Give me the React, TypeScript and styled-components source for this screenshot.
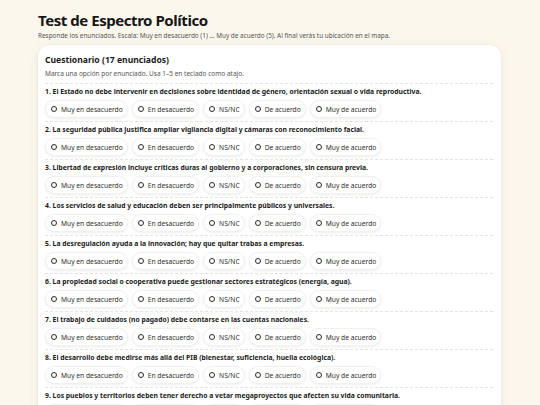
import React from "react";
import styled, { createGlobalStyle } from "styled-components";

const Global = createGlobalStyle`
  html, body { margin: 0; padding: 0; background: #fcf7ec; }
  body { font-family: "Noto Sans", "Open Sans", sans-serif; color: #1b1b1b; }
  * { box-sizing: border-box; }
`;

const Page = styled.div`
  padding: 10px 39px 0 38px;
  width: 540px;
`;

const Title = styled.h1`
  margin: 0 0 1px;
  font-size: 15px;
  line-height: 20px;
  font-weight: 700;
  letter-spacing: -0.45px;
  color: #161616;
`;

const Lead = styled.p`
  margin: 0 0 4px;
  font-size: 6.4px;
  line-height: 10px;
  color: #555;
`;

const Card = styled.section`
  background: #fff;
  border-radius: 12px;
  padding: 8px 8px 8px 7px;
  box-shadow: 0 2px 10px rgba(120, 100, 60, 0.10), 0 0 0 1px rgba(0,0,0,0.02);
`;

const CardTitle = styled.h2`
  margin: 0 0 2px;
  font-size: 8.6px;
  line-height: 14px;
  font-weight: 700;
`;

const CardLead = styled.p`
  margin: 0 0 4px;
  font-size: 6.5px;
  line-height: 10px;
  color: #555;
`;

const Item = styled.div`
  border-top: 1px dashed #e6e3dd;
  padding: 3px 0 3px;
`;

const Question = styled.div`
  font-size: 6.8px;
  line-height: 10px;
  font-weight: 700;
  margin-bottom: 3px;
  white-space: nowrap;
`;

const Options = styled.div`
  display: flex;
  gap: 4px;
`;

const Pill = styled.label`
  display: inline-flex;
  align-items: center;
  gap: 4px;
  height: 18px;
  padding: 0 4px 0 5px;
  border-radius: 999px;
  background: #fff;
  border: 1px solid #f3f1ed;
  box-shadow: 0 1px 3px rgba(0, 0, 0, 0.07);
  font-size: 6.7px;
  color: #2e2e2e;
  white-space: nowrap;
`;

const Dot = styled.span`
  width: 6px;
  height: 6px;
  border-radius: 50%;
  border: 1.3px solid #2b2b2b;
  flex: none;
`;

const options = ["Muy en desacuerdo", "En desacuerdo", "NS/NC", "De acuerdo", "Muy de acuerdo"];

const questions = [
  "El Estado no debe intervenir en decisiones sobre identidad de género, orientación sexual o vida reproductiva.",
  "La seguridad pública justifica ampliar vigilancia digital y cámaras con reconocimiento facial.",
  "Libertad de expresión incluye críticas duras al gobierno y a corporaciones, sin censura previa.",
  "Los servicios de salud y educación deben ser principalmente públicos y universales.",
  "La desregulación ayuda a la innovación; hay que quitar trabas a empresas.",
  "La propiedad social o cooperativa puede gestionar sectores estratégicos (energía, agua).",
  "El trabajo de cuidados (no pagado) debe contarse en las cuentas nacionales.",
  "El desarrollo debe medirse más allá del PIB (bienestar, suficiencia, huella ecológica).",
  "Los pueblos y territorios deben tener derecho a vetar megaproyectos que afecten su vida comunitaria.",
  "Los impuestos a grandes fortunas deben aumentar para financiar programas sociales.",
  "Las fuerzas armadas deben participar en tareas de seguridad pública.",
  "La migración debe regularse con enfoque de derechos humanos.",
  "El mercado asigna recursos mejor que la planificación estatal.",
  "Las decisiones importantes deben tomarse mediante consultas populares.",
  "La transición energética debe acelerarse aunque suba el costo a corto plazo.",
  "Las tradiciones y la familia son la base del orden social.",
  "Los sindicatos deben tener más poder de negociación colectiva.",
];

export default function App() {
  return (
    <>
      <Global />
      <Page>
        <Title>Test de Espectro Político</Title>
        <Lead>
          Responde los enunciados. Escala: Muy en desacuerdo (1) … Muy de acuerdo (5). Al final verás tu ubicación en el mapa.
        </Lead>
        <Card>
          <CardTitle>Cuestionario (17 enunciados)</CardTitle>
          <CardLead>Marca una opción por enunciado. Usa 1–5 en teclado como atajo.</CardLead>
          {questions.map((q, i) => (
            <Item key={i}>
              <Question>
                {i + 1}. {q}
              </Question>
              <Options>
                {options.map((o) => (
                  <Pill key={o}>
                    <Dot />
                    {o}
                  </Pill>
                ))}
              </Options>
            </Item>
          ))}
        </Card>
      </Page>
    </>
  );
}
